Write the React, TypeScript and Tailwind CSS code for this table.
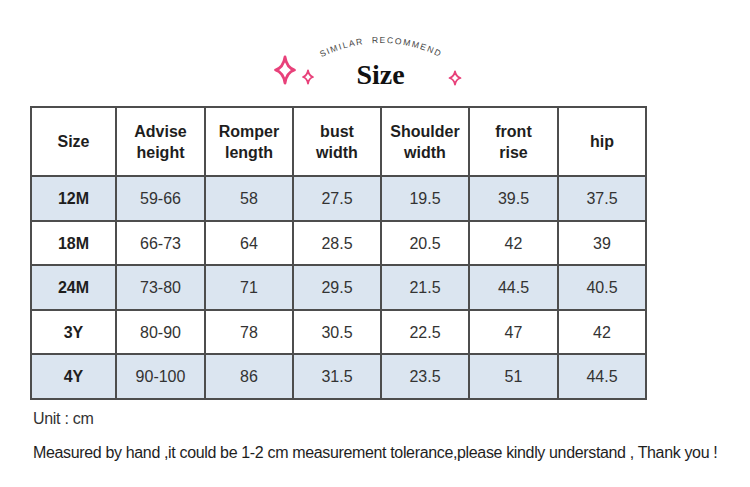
const rows = [
  { size: "12M", height: "59-66", length: "58", bust: "27.5", shoulder: "19.5", rise: "39.5", hip: "37.5" },
  { size: "18M", height: "66-73", length: "64", bust: "28.5", shoulder: "20.5", rise: "42", hip: "39" },
  { size: "24M", height: "73-80", length: "71", bust: "29.5", shoulder: "21.5", rise: "44.5", hip: "40.5" },
  { size: "3Y", height: "80-90", length: "78", bust: "30.5", shoulder: "22.5", rise: "47", hip: "42" },
  { size: "4Y", height: "90-100", length: "86", bust: "31.5", shoulder: "23.5", rise: "51", hip: "44.5" },
];

const headers = [
  ["Size"],
  ["Advise", "height"],
  ["Romper", "length"],
  ["bust", "width"],
  ["Shoulder", "width"],
  ["front", "rise"],
  ["hip"],
];

const colWidths = ["w-[85px]", "w-[89px]", "w-[88px]", "w-[88px]", "w-[88px]", "w-[89px]", "w-[88px]"];

function sparkle(cx: number, cy: number, rx: number, ry: number) {
  const kx = rx * 0.18;
  const ky = ry * 0.18;
  return `M${cx},${cy - ry} Q${cx + kx},${cy - ky} ${cx + rx},${cy} Q${cx + kx},${cy + ky} ${cx},${cy + ry} Q${cx - kx},${cy + ky} ${cx - rx},${cy} Q${cx - kx},${cy - ky} ${cx},${cy - ry}Z`;
}

function TitleBlock() {
  return (
    <div className="relative flex h-[106px] items-end justify-center pb-[20px] pl-[11px]">
      <svg className="absolute left-0 top-0" width="750" height="106" viewBox="0 0 750 106">
        <defs>
          <path id="arc" d="M251,173 A130,130 0 0 1 511,173" fill="none" />
        </defs>
        <text fill="#444" fontSize="8.6" letterSpacing="1.5" fontFamily="'Liberation Sans', Arial, sans-serif">
          <textPath href="#arc" startOffset="50%" textAnchor="middle" xmlSpace="preserve">
            SIMILAR  RECOMMEND
          </textPath>
        </text>
        <path d={sparkle(285, 70, 9.5, 13)} fill="none" stroke="#e8417a" strokeWidth="2.8" strokeLinejoin="round" />
        <path d={sparkle(308, 77, 5, 6.5)} fill="none" stroke="#e8417a" strokeWidth="1.8" strokeLinejoin="round" />
        <path d={sparkle(455, 78, 5.5, 6.5)} fill="none" stroke="#e8417a" strokeWidth="1.8" strokeLinejoin="round" />
      </svg>
      <span className="relative font-['Liberation_Serif',serif] text-[28px] font-bold leading-[22px] text-[#111]">
        Size
      </span>
    </div>
  );
}

export default function App() {
  return (
    <div className="h-[487px] w-[750px] overflow-hidden bg-white font-['Liberation_Sans',Arial,sans-serif]">
      <TitleBlock />
      <div className="pl-[30px]">
        <table className="border-collapse border-2 border-[#4d4d4d] text-[16px] leading-[21px]">
          <thead>
            <tr className="h-[69px] bg-white">
              {headers.map((h, i) => (
                <th
                  key={i}
                  className={`${colWidths[i]} border-2 border-[#4d4d4d] p-0 text-center font-bold text-[#1e1e1e]`}
                >
                  {h.map((line) => (
                    <div key={line}>{line}</div>
                  ))}
                </th>
              ))}
            </tr>
          </thead>
          <tbody>
            {rows.map((r, idx) => (
              <tr
                key={r.size}
                className={idx % 2 === 0 ? "h-[45px] bg-[#dbe5f0]" : "h-[44px] bg-white"}
              >
                <td className="border-2 border-[#4d4d4d] p-0 text-center font-bold text-[#1e1e1e]">{r.size}</td>
                <td className="border-2 border-[#4d4d4d] p-0 text-center text-[#333]">{r.height}</td>
                <td className="border-2 border-[#4d4d4d] p-0 text-center text-[#333]">{r.length}</td>
                <td className="border-2 border-[#4d4d4d] p-0 text-center text-[#333]">{r.bust}</td>
                <td className="border-2 border-[#4d4d4d] p-0 text-center text-[#333]">{r.shoulder}</td>
                <td className="border-2 border-[#4d4d4d] p-0 text-center text-[#333]">{r.rise}</td>
                <td className="border-2 border-[#4d4d4d] p-0 text-center text-[#333]">{r.hip}</td>
              </tr>
            ))}
          </tbody>
        </table>
      </div>
      <p className="mt-[9px] pl-[33px] text-[16px] leading-[20px] tracking-[-0.3px] text-[#333]">Unit : cm</p>
      <p className="mt-[14px] pl-[33px] text-[16px] leading-[20px] tracking-[-0.35px] text-[#1e1e1e]">
        Measured by hand ,it could be 1-2 cm measurement tolerance,please kindly understand , Thank you !
      </p>
    </div>
  );
}
